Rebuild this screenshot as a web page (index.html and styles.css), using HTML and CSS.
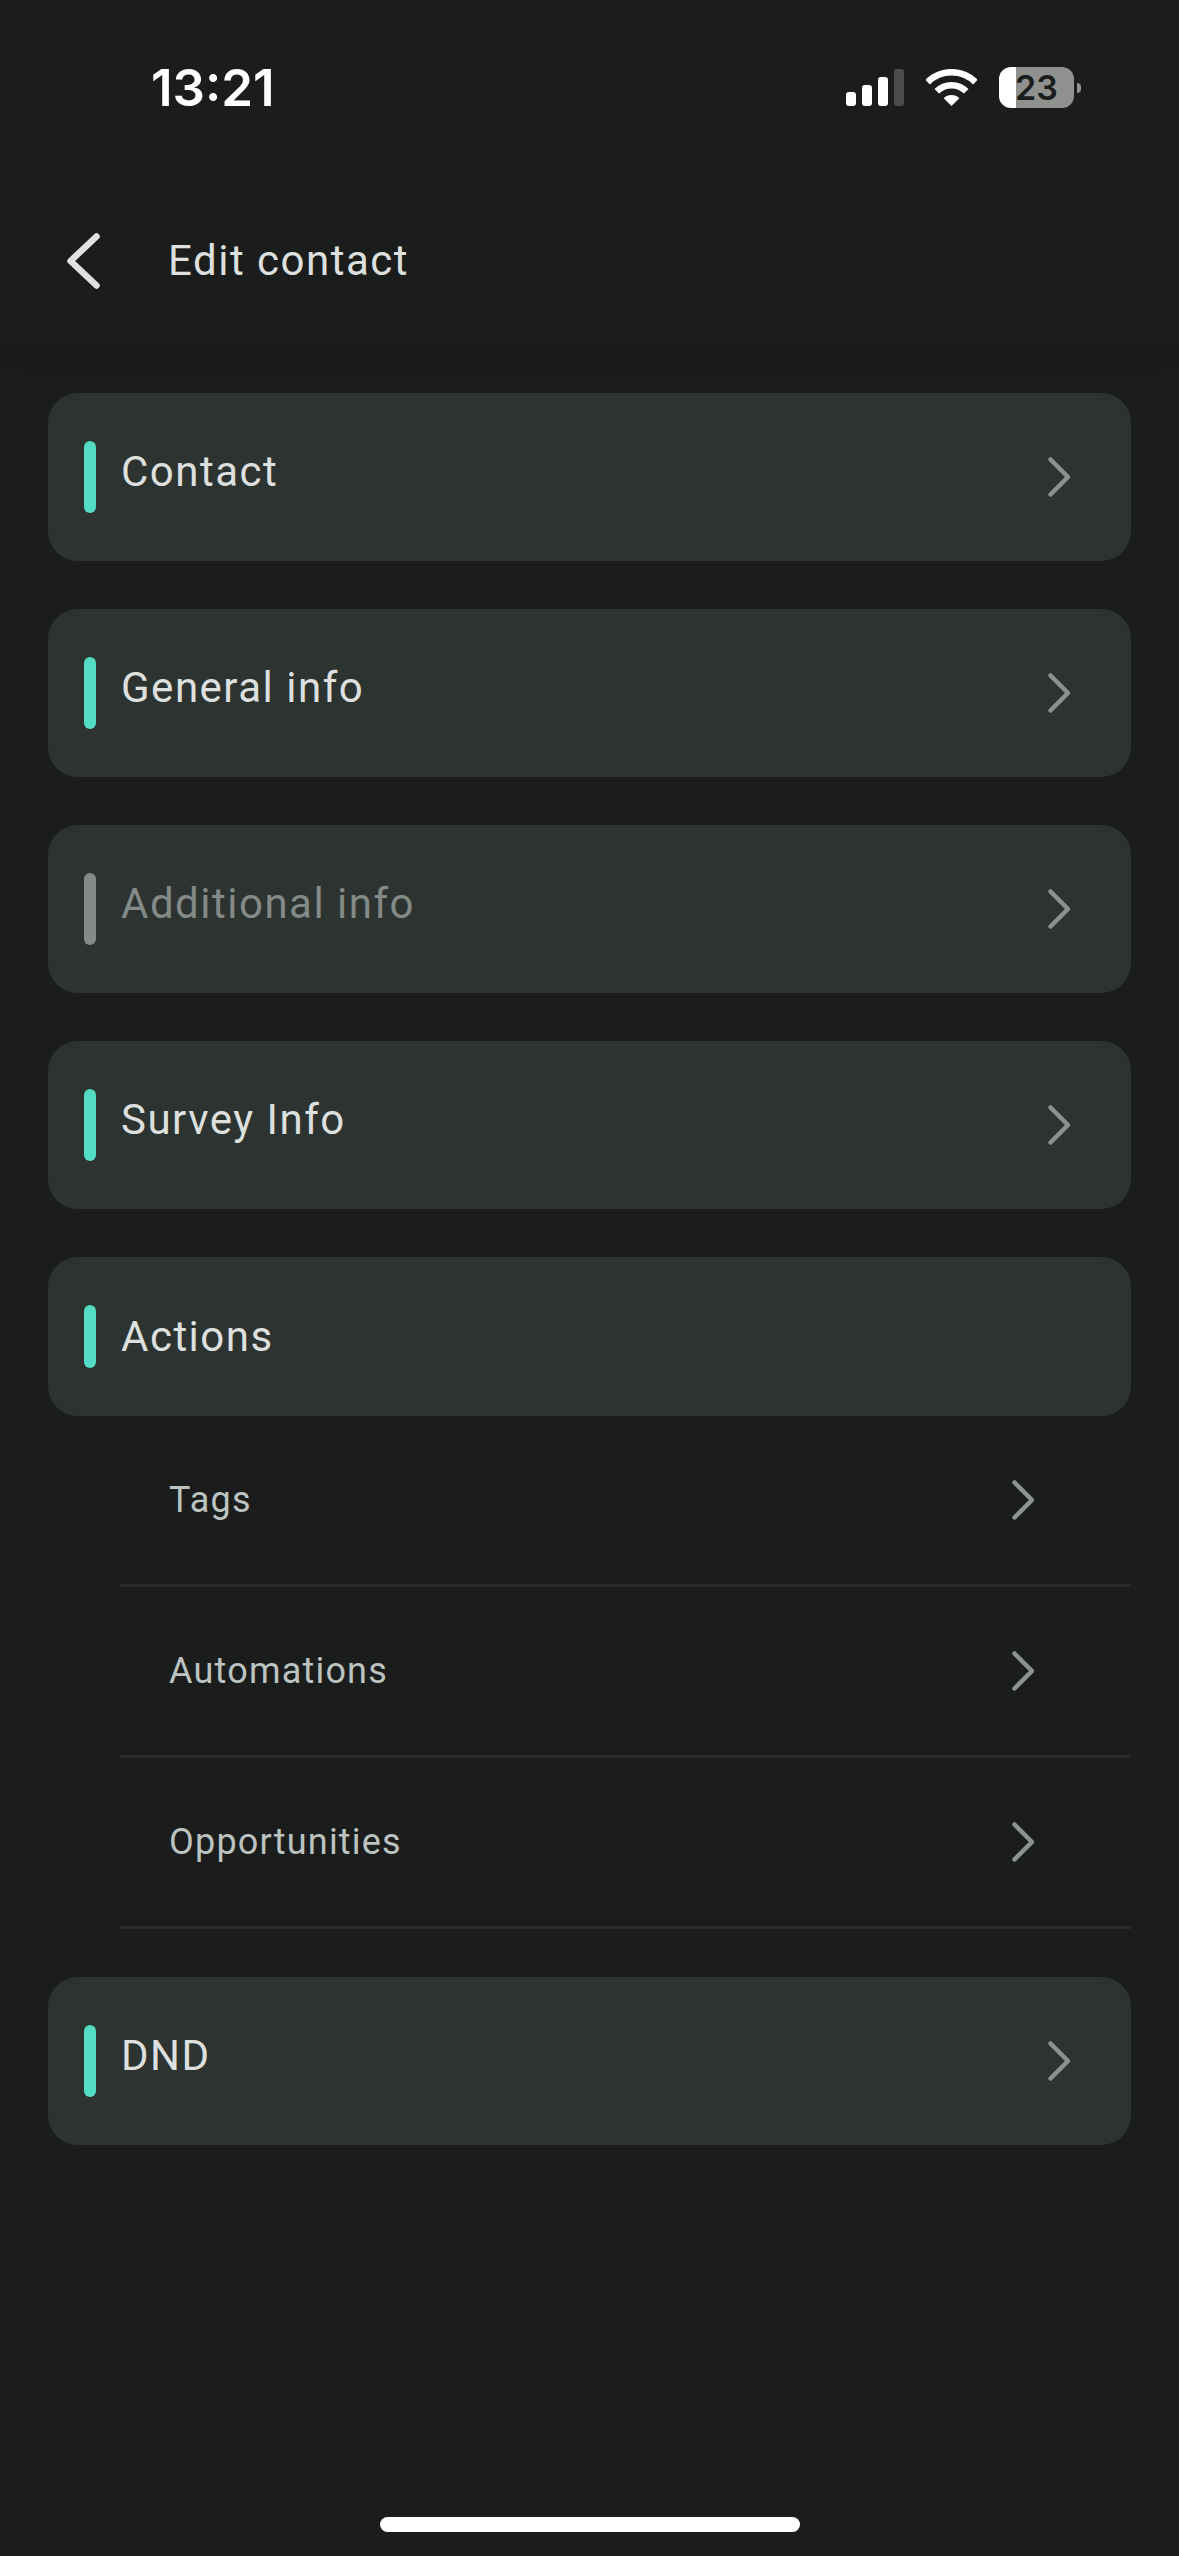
FILE: index.html
```html
<!DOCTYPE html>
<html>
<head>
	<meta name="viewport" content="width=device-width, initial-scale=1">
	<title>Edit contact</title>
	<link rel="stylesheet" href="styles.css">
</head>
<body>
	<svg class="defs" width="0" height="0">
		<symbol id="chev" viewBox="0 0 22 40">
			<polyline points="2.5,2.5 20,20 2.5,37.5" fill="none" stroke="currentColor" stroke-width="4.5" stroke-linecap="round" stroke-linejoin="round"/>
		</symbol>
	</svg>

	<div class="page">
		<div class="status-bar">
			<span class="time">13:21</span>
			<div class="status-icons">
				<div class="signal">
					<span class="signal-bar bar-1"></span>
					<span class="signal-bar bar-2"></span>
					<span class="signal-bar bar-3"></span>
					<span class="signal-bar bar-4"></span>
				</div>
				<svg class="wifi" viewBox="0 0 51 37">
					<path d="M1.6 13.1A33.75 33.75 0 0 1 49.4 13.1" fill="none" stroke="#fff" stroke-width="6.5"/>
					<path d="M10.8 22.3A20.75 20.75 0 0 1 40.2 22.3" fill="none" stroke="#fff" stroke-width="6.5"/>
					<path d="M25.5 37L17.7 29.2A11 11 0 0 1 33.3 29.2Z" fill="#fff"/>
				</svg>
				<div class="battery">
					<span class="battery-body">23</span>
					<span class="battery-nub"></span>
				</div>
			</div>
		</div>

		<div class="header">
			<svg class="back" viewBox="0 0 33 56">
				<polyline points="29.5,3.5 3.5,28 29.5,52.5" fill="none" stroke="currentColor" stroke-width="6.5" stroke-linecap="round" stroke-linejoin="round"/>
			</svg>
			<span class="title">Edit contact</span>
		</div>

		<div class="content">
			<div class="card">
				<span class="marker"></span>
				<span class="card-label">Contact</span>
				<svg class="chevron"><use href="#chev"/></svg>
			</div>
			<div class="card">
				<span class="marker"></span>
				<span class="card-label">General info</span>
				<svg class="chevron"><use href="#chev"/></svg>
			</div>
			<div class="card muted">
				<span class="marker"></span>
				<span class="card-label">Additional info</span>
				<svg class="chevron"><use href="#chev"/></svg>
			</div>
			<div class="card">
				<span class="marker"></span>
				<span class="card-label">Survey Info</span>
				<svg class="chevron"><use href="#chev"/></svg>
			</div>

			<div class="group">
				<div class="card open">
					<span class="marker"></span>
					<span class="card-label">Actions</span>
				</div>
				<div class="sub-list">
					<div class="sub-row">
						<span class="sub-label">Tags</span>
						<svg class="chevron"><use href="#chev"/></svg>
					</div>
					<div class="sub-row">
						<span class="sub-label">Automations</span>
						<svg class="chevron"><use href="#chev"/></svg>
					</div>
					<div class="sub-row">
						<span class="sub-label">Opportunities</span>
						<svg class="chevron"><use href="#chev"/></svg>
					</div>
				</div>
			</div>

			<div class="card">
				<span class="marker"></span>
				<span class="card-label">DND</span>
				<svg class="chevron"><use href="#chev"/></svg>
			</div>
		</div>

		<div class="home-bar"></div>
	</div>
</body>
</html>
```
FILE: styles.css
```css
html, body {
	margin: 0;
	padding: 0;
	background-color: #1b1d1c;
}
body {
	font-family: Roboto, Arial, sans-serif;
	color: #dde0de;
}
.defs {
	display: block;
	height: 0;
}
.page {
	display: flex;
	flex-direction: column;
	width: 1179px;
	height: 2556px;
	overflow: hidden;
}
.status-bar {
	position: relative;
	z-index: 1;
	display: flex;
	justify-content: space-between;
	align-items: flex-start;
	height: 150px;
	padding: 58px 98px 0 151px;
	box-sizing: border-box;
	background-color: #1b1d1c;
}
.time {
	font-family: Inter, Arial, sans-serif;
	font-size: 51px;
	font-weight: 600;
	line-height: 60px;
	letter-spacing: 0;
	color: #fff;
}
.status-icons {
	display: flex;
	align-items: center;
	gap: 22px;
	padding-top: 9px;
}
.signal {
	display: flex;
	align-items: flex-end;
	gap: 6px;
	height: 37px;
}
.signal-bar {
	width: 10px;
	background-color: #fff;
	border-radius: 3px;
}
.bar-1 { height: 14px; }
.bar-2 { height: 21px; }
.bar-3 { height: 29px; }
.bar-4 { height: 37px; background-color: #4a4c4b; }
.wifi {
	width: 51px;
	height: 37px;
}
.battery {
	display: flex;
	align-items: center;
	gap: 3px;
}
.battery-body {
	width: 75px;
	height: 41px;
	border-radius: 12px;
	background: linear-gradient(90deg, #fff 23%, #8f918f 23%);
	color: #1b1d1c;
	font-family: Inter, Arial, sans-serif;
	font-size: 34px;
	font-weight: 600;
	line-height: 41px;
	text-align: center;
}
.battery-nub {
	width: 4px;
	height: 10px;
	background-color: #8f918f;
	border-radius: 0 5px 5px 0;
}
.header {
	display: flex;
	align-items: center;
	gap: 68px;
	height: 195px;
	padding: 26px 0 0 67px;
	box-sizing: border-box;
	background-color: #1b1d1c;
	box-shadow: 0 6px 24px rgba(0, 0, 0, 0.12);
}
.back {
	width: 33px;
	height: 56px;
	color: #dfe2e0;
}
.title {
	font-size: 42px;
	letter-spacing: 1.5px;
	color: #dde0de;
}
.content {
	display: flex;
	flex-direction: column;
	gap: 48px;
	padding: 48px 48px 0;
}
.card {
	display: flex;
	align-items: center;
	height: 168px;
	padding: 0 61px 0 36px;
	background-color: #2d3331;
	border-radius: 30px;
}
.card.open {
	height: 159px;
}
.marker {
	flex: none;
	width: 12px;
	height: 72px;
	margin-right: 25px;
	background-color: #55dcc4;
	border-radius: 6px;
}
.card.open .marker {
	height: 63px;
}
.card.muted .marker {
	background-color: #838a87;
}
.card-label {
	flex: 1;
	margin-bottom: 12px;
	font-size: 42px;
	letter-spacing: 1.5px;
	color: #dde0de;
}
.card.open .card-label {
	margin-bottom: 0;
}
.card.muted .card-label {
	color: #838a87;
}
.chevron {
	flex: none;
	width: 22px;
	height: 40px;
	color: #8b9390;
}
.sub-list {
	margin-left: 72px;
}
.sub-row {
	display: flex;
	align-items: center;
	justify-content: space-between;
	height: 171px;
	padding: 0 97px 0 49px;
	box-sizing: border-box;
	border-bottom: 3px solid #2a2c2b;
}
.sub-label {
	font-size: 36px;
	letter-spacing: 1.2px;
	color: #bcc3c0;
}
.home-bar {
	flex: none;
	width: 420px;
	height: 15px;
	margin: auto auto 24px;
	background-color: #fff;
	border-radius: 8px;
}
```
